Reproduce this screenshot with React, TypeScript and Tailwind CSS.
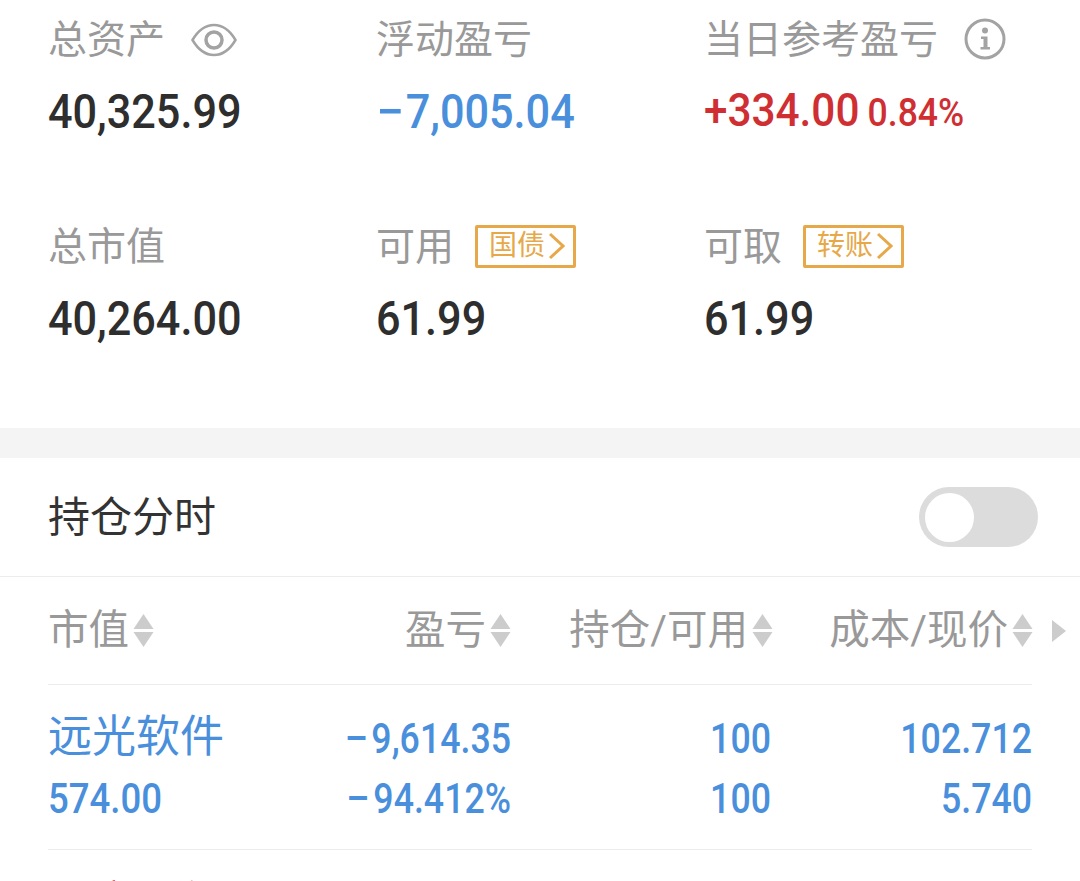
function SortIcon() {
  return (
    <svg width="21" height="34" viewBox="0 0 21 34" className="ml-[4px] shrink-0" fill="#cccccc">
      <path d="M10.5 0 L20.5 15 H0.5 Z" />
      <path d="M0.5 18 H20.5 L10.5 33 Z" />
    </svg>
  );
}

function EyeIcon() {
  return (
    <svg width="46" height="34" viewBox="0 0 46 34" fill="none" stroke="#a3a3a3" className="ml-[26px] mt-[2px]">
      <path d="M1.5 17 C8 6 16 2 23 2 C30 2 38 6 44.5 17 C38 28 30 32 23 32 C16 32 8 28 1.5 17 Z" strokeWidth="2.5" />
      <circle cx="23" cy="17" r="8" strokeWidth="3.5" />
    </svg>
  );
}

function InfoIcon() {
  return (
    <svg width="42" height="42" viewBox="0 0 42 42" fill="none" className="ml-[26px]">
      <circle cx="21" cy="21" r="19" stroke="#a3a3a3" strokeWidth="3" />
      <circle cx="21" cy="12.5" r="3" fill="#a3a3a3" />
      <path d="M17 18.5 H23.5 V29 H26 V31.5 H16.5 V29 H19.5 V21 H17 Z" fill="#a3a3a3" />
    </svg>
  );
}

function Tag({ label }: { label: string }) {
  return (
    <span className="ml-[21px] flex h-[43px] w-[101px] items-center rounded-[2px] border-[3px] border-[#e6a849] pl-[11px] text-[28px] leading-none text-[#e6a849]">
      {label}
      <svg width="17" height="28" viewBox="0 0 17 28" fill="none" stroke="#e6a849" strokeWidth="3" className="ml-[3px]">
        <path d="M2 2 L15 14 L2 26" />
      </svg>
    </span>
  );
}

function Stat({
  label,
  icon,
  value,
  extra,
  color = "text-[#2e2e2e]",
}: {
  label: string;
  icon?: React.ReactNode;
  value: React.ReactNode;
  extra?: string;
  color?: string;
}) {
  return (
    <div className="flex flex-col">
      <div className="flex h-[44px] items-center text-[39px] leading-none text-[#999999]">
        <span className="pt-[2px]">{label}</span>
        {icon}
      </div>
      <div
        className={`flex h-[44px] origin-left scale-x-[0.9] items-baseline whitespace-nowrap font-medium leading-none ${
          extra ? "mt-[25px] text-[47px]" : "mt-[27px] text-[48px]"
        } ${color}`}
      >
        {value}
        {extra ? <span className="ml-[9px] text-[39.5px]">{extra}</span> : null}
      </div>
    </div>
  );
}

function HeadCell({ label, left }: { label: string; left?: boolean }) {
  return (
    <div className={`flex items-center ${left ? "justify-start" : "justify-end"}`}>
      <span className="text-[40.5px] leading-none text-[#999999]">{label}</span>
      <SortIcon />
    </div>
  );
}

function Num({ children, left }: { children: string; left?: boolean }) {
  const negative = children.startsWith("−");
  return (
    <div
      className={`h-[60px] whitespace-nowrap text-[42px] font-medium leading-[60px] ${
        left ? "origin-left scale-x-[0.87] text-left" : "origin-right scale-x-[0.85] text-right"
      }`}
    >
      {negative ? <span className="mr-[8px] inline-block origin-left scale-x-[1.2]">−</span> : null}
      {negative ? children.slice(1) : children}
    </div>
  );
}

const columns = [
  ["−9,614.35", "−94.412%"],
  ["100", "100"],
  ["102.712", "5.740"],
];

export default function App() {
  return (
    <div className="h-[881px] w-[1080px] overflow-hidden bg-white font-['Roboto','Noto_Sans_CJK_SC',sans-serif]">
      <section className="grid h-[428px] grid-cols-[328px_328px_1fr] content-start gap-y-[92px] pl-12 pt-[17px]">
        <Stat label="总资产" icon={<EyeIcon />} value="40,325.99" />
        <Stat
          label="浮动盈亏"
          value={
            <>
              <span className="mr-[6px] inline-block origin-left scale-x-[1.15]">−</span>7,005.04
            </>
          }
          color="text-[#4a8fdc]"
        />
        <Stat label="当日参考盈亏" icon={<InfoIcon />} value="+334.00" extra="0.84%" color="text-[#cf2f32]" />
        <Stat label="总市值" value="40,264.00" />
        <Stat label="可用" icon={<Tag label="国债" />} value="61.99" />
        <Stat label="可取" icon={<Tag label="转账" />} value="61.99" />
      </section>

      <div className="h-[30px] bg-[#f4f4f4]" />

      <div className="flex h-[119px] items-center justify-between border-b border-[#ececec] pl-12 pr-[42px]">
        <span className="pt-[2px] text-[42px] leading-none text-[#333333]">持仓分时</span>
        <div className="flex h-[60px] w-[119px] items-center rounded-full bg-[#dcdcdc] pl-[6px]">
          <div className="size-[49px] rounded-full bg-white" />
        </div>
      </div>

      <div className="flex h-[107px] items-center pl-12">
        <div className="grid w-[985px] grid-cols-[232px_231px_262px_260px]">
          <HeadCell label="市值" left />
          <HeadCell label="盈亏" />
          <HeadCell label="持仓/可用" />
          <HeadCell label="成本/现价" />
        </div>
        <svg width="14" height="22" viewBox="0 0 14 22" fill="#cccccc" className="ml-[19px]">
          <path d="M0 0 L14 11 L0 22 Z" />
        </svg>
      </div>

      <div className="w-[1032px] pl-12">
        <div className="grid grid-cols-[232px_231px_260px_261px] border-y border-[#ececec] pb-[20px] pt-[24px] text-[#4a8fdc]">
          <div>
            <div className="h-[60px] text-[44px] leading-[56px]">远光软件</div>
            <Num left>574.00</Num>
          </div>
          {columns.map((col) => (
            <div key={col[0]}>
              <Num>{col[0]}</Num>
              <Num>{col[1]}</Num>
            </div>
          ))}
        </div>
        <div className="pt-[25px] text-[44px] leading-[56px] text-[#cf2f32]">四方股份</div>
      </div>
    </div>
  );
}
